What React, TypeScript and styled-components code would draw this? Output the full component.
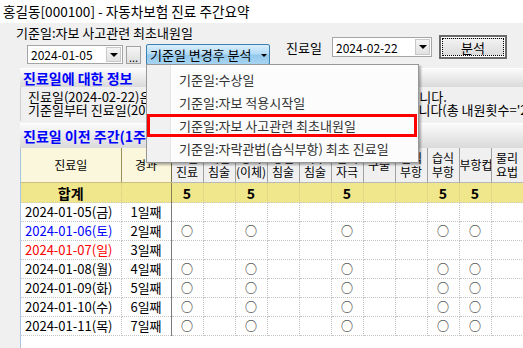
import React from "react";
import styled, { createGlobalStyle } from "styled-components";

const GlobalStyle = createGlobalStyle`
  html, body {
    margin: 0;
    padding: 0;
    background: #f0f0f0;
  }
  body {
    font-family: "Noto Sans CJK KR", "Noto Sans", sans-serif;
    font-size: 13px;
    color: #000;
  }
`;

const Window = styled.div`
  width: 523px;
  height: 348px;
  overflow: hidden;
  position: relative;
  background: #f0f0f0;
`;

const TitleBar = styled.div`
  height: 23px;
  background: #fff;
  padding-left: 3px;
  font-size: 13.6px;
  line-height: 22px;
  white-space: nowrap;
  color: #000;
`;

const Toolbar = styled.div`
  display: flex;
  align-items: flex-start;
  height: 45px;
  padding-top: 2px;
  box-sizing: border-box;
`;

const LeftCol = styled.div`
  flex: none;
  display: flex;
  flex-direction: column;
  gap: 3px;
`;

const CriteriaLabel = styled.div`
  padding-left: 16px;
  line-height: 16px;
  white-space: nowrap;
`;

const ControlRow = styled.div`
  display: flex;
  align-items: center;
  padding-left: 27px;
`;

const Combo = styled.div<{ $w: number; $h: number }>`
  display: flex;
  width: ${(p) => p.$w}px;
  height: ${(p) => p.$h}px;
  box-sizing: border-box;
  border: 1px solid #a5a5a5;
  background: #fff;
  padding: 1px;
`;

const ComboText = styled.div`
  flex: 1;
  padding-left: 2px;
  display: flex;
  align-items: center;
  font-size: 12px;
  white-space: nowrap;
`;

const ComboArrow = styled.div`
  width: 15px;
  box-sizing: border-box;
  border: 1px solid #c8c8c8;
  background: linear-gradient(#f4f4f4, #e2e2e2);
  display: flex;
  align-items: center;
  justify-content: center;

  &::after {
    content: "";
    border-left: 4px solid transparent;
    border-right: 4px solid transparent;
    border-top: 4px solid #000;
  }
`;

const DotsButton = styled.div`
  margin-left: 3px;
  width: 15px;
  height: 18px;
  box-sizing: border-box;
  border: 1px solid #a0a0a0;
  background: linear-gradient(#f6f6f6, #dedede);
  display: flex;
  align-items: flex-end;
  justify-content: center;
  line-height: 12px;
  font-size: 11px;
`;

const MenuAnchor = styled.div`
  position: relative;
  margin-left: 5px;
`;

const MenuButton = styled.div`
  width: 124px;
  height: 21px;
  box-sizing: border-box;
  border: 1px solid #3c7fb1;
  border-radius: 2px;
  background: linear-gradient(#d9eefc 0%, #b4dcf6 45%, #94c8ec 55%, #a6d4f1 100%);
  display: flex;
  align-items: center;
  padding-left: 3px;
  white-space: nowrap;
  gap: 9px;

  &::after {
    content: "";
    border-left: 3px solid transparent;
    border-right: 3px solid transparent;
    border-top: 3px solid #000;
    margin-top: 2px;
  }
`;

const Menu = styled.div`
  position: absolute;
  left: 0;
  top: 20px;
  width: 273px;
  box-sizing: border-box;
  padding: 3px 0 2px 0;
  background: linear-gradient(90deg, #f1f1f1 0, #f1f1f1 23px, #e2e3e3 23px, #e2e3e3 24px, #fff 24px, #fff 25px, #fcfcfc 25px);
  border: 1px solid #979797;
  box-shadow: 2px 2px 2px rgba(0, 0, 0, 0.3);
  z-index: 10;
`;

const MenuItem = styled.div<{ $marked?: boolean }>`
  height: 23px;
  box-sizing: border-box;
  margin-right: 1px;
  padding-left: 29px;
  line-height: 17px;
  color: #333;
  white-space: nowrap;
  border: 3px solid ${(p) => (p.$marked ? "#ff0000" : "transparent")};
`;

const RightGroup = styled.div`
  display: flex;
  align-items: center;
  margin-left: 16px;
  margin-top: 10px;
`;

const FieldLabel = styled.div`
  width: 46px;
  white-space: nowrap;
`;

const AnalyzeButton = styled.div`
  margin-left: 7px;
  width: 68px;
  height: 24px;
  box-sizing: border-box;
  border: 2px solid #6a6a6a;
  background: #fff;
  padding: 1px;
  display: flex;
`;

const AnalyzeInner = styled.div`
  flex: 1;
  background: linear-gradient(#f2f2f2, #dcdcdc);
  border: 1px dotted #000;
  display: flex;
  align-items: center;
  justify-content: center;
`;

const Panel = styled.div`
  margin-left: 20px;
  width: 520px;
`;

const SectionHeader = styled.div<{ $h: number }>`
  height: ${(p) => p.$h}px;
  box-sizing: border-box;
  border-top: 1px solid #fff;
  background: linear-gradient(#fafafa, #dadada);
  color: #0000ff;
  font-weight: bold;
  font-size: 14px;
  padding-left: 3px;
  display: flex;
  align-items: center;
  white-space: nowrap;
`;

const InfoBox = styled.div`
  height: 34px;
  box-sizing: border-box;
  border-left: 1px solid #cfcfcf;
  padding: 3px 0 0 7px;
  line-height: 13px;
  margin-bottom: 2px;
  overflow: hidden;
`;

const InfoLine = styled.div`
  white-space: nowrap;
`;

const GridArea = styled.div`
  background: #fff;
  border-left: 1px solid #a8c4e0;
  height: 200px;
`;

const Table = styled.table`
  border-collapse: collapse;
  table-layout: fixed;
  width: 502px;
`;

const HeadCell = styled.th<{ $fixed?: boolean; $split?: boolean }>`
  height: 34px;
  padding: 0;
  font-weight: normal;
  font-size: 12px;
  line-height: 14px;
  text-align: center;
  background: ${(p) => (p.$fixed ? "#fbf7dc" : "#f0f0f0")};
  border-right: 1px solid ${(p) => (p.$split ? "#7a7044" : p.$fixed ? "#9c8f55" : "#a0a0a0")};
  border-bottom: 1px solid ${(p) => (p.$fixed ? "#c9bd82" : "#b8b8b8")};
  overflow: hidden;
  white-space: nowrap;
`;

const TotalCell = styled.td<{ $split?: boolean }>`
  height: 19px;
  padding: 0;
  background: #f0e68c;
  font-weight: bold;
  font-size: 14px;
  line-height: 18px;
  text-align: center;
  border-right: 1px ${(p) => (p.$split ? "solid #8a8050" : "dotted #d6cc88")};
  border-bottom: 1px dotted #c8c8c8;
`;

const DataCell = styled.td<{ $color?: string; $left?: boolean; $split?: boolean }>`
  height: 18px;
  padding: 0 0 0 ${(p) => (p.$left ? "4px" : "0")};
  color: ${(p) => p.$color || "#000"};
  text-align: ${(p) => (p.$left ? "left" : "center")};
  font-size: 13px;
  line-height: 18px;
  white-space: nowrap;
  overflow: hidden;
  border-right: 1px ${(p) => (p.$split ? "solid #7a7a7a" : "dotted #c4c4c4")};
  border-bottom: 1px dotted #c4c4c4;
`;

const Mark = styled.span`
  font-size: 12px;
`;

const headers = [
  "초진\n진료",
  "재진\n침술",
  "경락\n(이체)",
  "경혈\n침술",
  "특수\n침술",
  "전기\n자극",
  "구술",
  "건식\n부항",
  "습식\n부항",
  "부항컵",
  "물리\n요법",
];

const marked = [0, 2, 5, 8, 9];

const rows = [
  { date: "2024-01-05(금)", day: "1일째", color: "#000", checked: false },
  { date: "2024-01-06(토)", day: "2일째", color: "#0000ff", checked: true },
  { date: "2024-01-07(일)", day: "3일째", color: "#ff0000", checked: false },
  { date: "2024-01-08(월)", day: "4일째", color: "#000", checked: true },
  { date: "2024-01-09(화)", day: "5일째", color: "#000", checked: true },
  { date: "2024-01-10(수)", day: "6일째", color: "#000", checked: true },
  { date: "2024-01-11(목)", day: "7일째", color: "#000", checked: true },
];

const menuItems = [
  "기준일:수상일",
  "기준일:자보 적용시작일",
  "기준일:자보 사고관련 최초내원일",
  "기준일:자락관법(습식부항) 최초 진료일",
];

const App: React.FC = () => {
  return (
    <Window>
      <GlobalStyle />
      <TitleBar>홍길동[000100] - 자동차보험 진료 주간요약</TitleBar>
      <Toolbar>
        <LeftCol>
          <CriteriaLabel>기준일:자보 사고관련 최초내원일</CriteriaLabel>
          <ControlRow>
            <Combo $w={96} $h={19}>
              <ComboText>2024-01-05</ComboText>
              <ComboArrow />
            </Combo>
            <DotsButton>...</DotsButton>
            <MenuAnchor>
              <MenuButton>기준일 변경후 분석</MenuButton>
              <Menu>
                {menuItems.map((item, i) => (
                  <MenuItem key={item} $marked={i === 2}>
                    {item}
                  </MenuItem>
                ))}
              </Menu>
            </MenuAnchor>
          </ControlRow>
        </LeftCol>
        <RightGroup>
          <FieldLabel>진료일</FieldLabel>
          <Combo $w={100} $h={20}>
            <ComboText>2024-02-22</ComboText>
            <ComboArrow />
          </Combo>
          <AnalyzeButton>
            <AnalyzeInner>분석</AnalyzeInner>
          </AnalyzeButton>
        </RightGroup>
      </Toolbar>
      <Panel>
        <SectionHeader $h={19}>진료일에 대한 정보</SectionHeader>
        <InfoBox>
          <InfoLine>진료일(2024-02-22)은 기준일(2024-01-05)로부터 49일째, 7주째 진료입니다.</InfoLine>
          <InfoLine>기준일부터 진료일(2024-02-22)까지의 진료기간은 49일, 7주가 경과했습니다(총 내원횟수='28')</InfoLine>
        </InfoBox>
        <SectionHeader $h={25}>진료일 이전 주간(1주차 : 2024-01-05 ~ 2024-01-11)</SectionHeader>
        <GridArea>
          <Table>
            <colgroup>
              <col style={{ width: 100 }} />
              <col style={{ width: 50 }} />
              {headers.map((h) => (
                <col key={h} style={{ width: 32 }} />
              ))}
            </colgroup>
            <thead>
              <tr>
                <HeadCell $fixed>진료일</HeadCell>
                <HeadCell $fixed $split>경과</HeadCell>
                {headers.map((h) => (
                  <HeadCell key={h}>
                    {h.split("\n").map((line) => (
                      <div key={line}>{line}</div>
                    ))}
                  </HeadCell>
                ))}
              </tr>
            </thead>
            <tbody>
              <tr>
                <TotalCell>합계</TotalCell>
                <TotalCell $split />
                {headers.map((h, i) => (
                  <TotalCell key={h}>{marked.includes(i) ? "5" : ""}</TotalCell>
                ))}
              </tr>
              {rows.map((r) => (
                <tr key={r.date}>
                  <DataCell $left $color={r.color}>
                    {r.date}
                  </DataCell>
                  <DataCell $split>{r.day}</DataCell>
                  {headers.map((h, i) => (
                    <DataCell key={h}>
                      {r.checked && marked.includes(i) ? <Mark>○</Mark> : ""}
                    </DataCell>
                  ))}
                </tr>
              ))}
            </tbody>
          </Table>
        </GridArea>
      </Panel>
    </Window>
  );
};

export default App;
